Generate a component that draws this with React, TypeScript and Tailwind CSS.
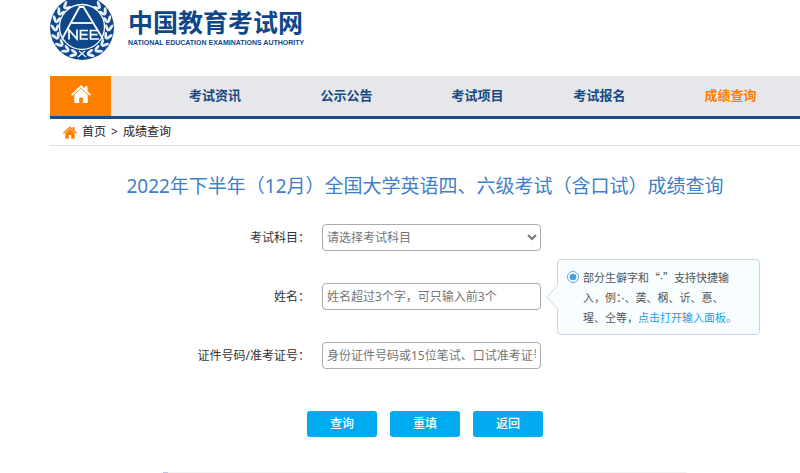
import { FormEvent, useState } from 'react';

interface NavItem {
  label: string;
  width: string;
  active?: boolean;
}

const navItems: NavItem[] = [
  { label: '考试资讯', width: 'w-[132px]' },
  { label: '公示公告', width: 'w-[131px]' },
  { label: '考试项目', width: 'w-[131px]' },
  { label: '考试报名', width: 'w-[113px]' },
  { label: '成绩查询', width: 'w-[149px]', active: true },
];

const leafAngles = [14, 32, 50, 68, 86, 104, 122, 140];

function Wreath() {
  return (
    <g fill="#e8f0f8">
      {leafAngles.map((a) => (
        <g key={a} transform={`rotate(${180 - a} 32 32)`}>
          <ellipse cx="30" cy="3.4" rx="4" ry="1.5" transform="rotate(30 30 3.4)" />
          <ellipse cx="30" cy="7.2" rx="3.6" ry="1.4" transform="rotate(-22 30 7.2)" />
        </g>
      ))}
    </g>
  );
}

function Emblem() {
  return (
    <svg viewBox="0 0 64 64" className="-mt-1 size-16 shrink-0" aria-hidden="true">
      <circle cx="32" cy="32" r="32" fill="#0f478a" />
      <Wreath />
      <g transform="translate(64 0) scale(-1 1)">
        <Wreath />
      </g>
      <circle cx="32" cy="31" r="22.5" fill="#0f478a" stroke="#fff" strokeWidth="1.3" />
      <g fill="none" stroke="#fff" strokeWidth="1.8">
        <path d="M12 43 29.5 11h4L53 43" />
        <path d="M21.5 27h21" />
        <path d="M19 43.5V34l8 9V33.5" strokeWidth="1.7" />
        <path d="M38 34.5h-7.5v8.5H38M30.5 38.7h7" strokeWidth="1.7" />
        <path d="M48 34.5h-7.5v8.5H49M40.5 38.7h7" strokeWidth="1.7" />
      </g>
      <path d="m28 61 7-6M36 61l-7-6" stroke="#e8f0f8" strokeWidth="1.3" />
    </svg>
  );
}

function HomeIcon({ className }: { className: string }) {
  return (
    <svg viewBox="0 0 20 18" className={className} fill="currentColor" aria-hidden="true">
      <path d="M10 0 0 9.4l1.2 1.3L10 2.9l8.8 7.8L20 9.4l-3.5-3.3V1.2h-2.7v2.4z" />
      <path d="M10 3.7 3.3 9.8V18h4.900v-5.400h3.600V18h4.900V9.800z" />
    </svg>
  );
}

const labelClass = 'w-[260px] shrink-0 text-right text-xs text-[#333]';
const fieldClass =
  'h-[27px] w-[219px] rounded border border-[#aaa] bg-white text-xs text-[#757575] placeholder:text-[#757575] outline-none focus:border-[#00a9f2]';
const buttonClass = 'h-[26px] w-[70px] rounded-[3px] bg-[#00aaf1] text-xs font-medium text-white hover:bg-[#0098d8]';

export default function App() {
  const [subject, setSubject] = useState('');
  const [name, setName] = useState('');
  const [idNumber, setIdNumber] = useState('');

  const handleSubmit = (e: FormEvent) => {
    e.preventDefault();
  };

  const handleReset = () => {
    setSubject('');
    setName('');
    setIdNumber('');
  };

  return (
    <div className="overflow-x-hidden bg-white pl-[50px] font-['Noto_Sans','Noto_Sans_CJK_SC',sans-serif] text-[#333]">
      <header className="flex h-19 items-start gap-[14px] overflow-hidden">
        <Emblem />
        <div className="pt-[7px] text-[#0f478a]">
          <div className="font-['Noto_Sans_CJK_SC',sans-serif] text-[25px] leading-7 font-bold">中国教育考试网</div>
          <div className="mt-[3px] font-['Liberation_Sans',sans-serif] text-[7px] leading-[10px] font-bold whitespace-nowrap">
            NATIONAL EDUCATION EXAMINATIONS AUTHORITY
          </div>
        </div>
      </header>

      <nav className="flex h-[43px] border-b-3 border-[#1a4a82] bg-[#e6e7eb]">
        <a href="#home" aria-label="首页" className="flex w-[61px] shrink-0 items-center justify-center bg-[#ff7f00] text-white">
          <HomeIcon className="mb-1 h-[18px] w-5" />
        </a>
        <div className="flex items-center pl-[38px]">
          {navItems.map((item) => (
            <a
              key={item.label}
              href="#nav"
              className={`${item.width} shrink-0 text-center text-[13px] font-bold ${
                item.active ? 'text-[#ff7f00]' : 'text-[#174a80]'
              }`}
            >
              {item.label}
            </a>
          ))}
        </div>
      </nav>

      <div className="flex h-[27px] items-center border-b border-[#ddd] pl-[13px] text-xs text-[#222]">
        <HomeIcon className="mr-[5px] h-[13px] w-[14px] text-[#ff7f00]" />
        <a href="#home">首页</a>
        <span className="mx-[5px]">&gt;</span>
        <a href="#query">成绩查询</a>
      </div>

      <main>
        <h1 className="mt-6 text-center text-[19px] leading-8 whitespace-nowrap text-[#4080c8]">
          2022年下半年（12月）全国大学英语四、六级考试（含口试）成绩查询
        </h1>

        <form onSubmit={handleSubmit} onReset={handleReset} className="mt-[22px] flex flex-col gap-8">
          <div className="flex items-center gap-3">
            <label htmlFor="subject" className={labelClass}>考试科目：</label>
            <select id="subject" value={subject} onChange={(e) => setSubject(e.target.value)} className={fieldClass}>
              <option value="">请选择考试科目</option>
              <option value="cet4">英语四级笔试</option>
              <option value="cet6">英语六级笔试</option>
            </select>
          </div>

          <div className="flex items-center gap-3">
            <label htmlFor="name" className={labelClass}>姓名：</label>
            <div className="relative">
              <input
                id="name"
                type="text"
                value={name}
                onChange={(e) => setName(e.target.value)}
                placeholder="姓名超过3个字，可只输入前3个"
                className={`${fieldClass} block px-1`}
              />
              <div className="absolute top-1/2 left-full ml-4 flex w-[203px] -translate-y-1/2 gap-1 rounded border border-[#c8d8ec] bg-[#f8fdff] py-[7px] pr-3 pl-[9px] text-[11px] leading-5 text-[#555]">
                <svg viewBox="0 0 12 24" className="absolute top-1/2 -left-3 h-6 w-3 -translate-y-1/2" aria-hidden="true">
                  <path d="M12 0 1 12l11 12" fill="#f8fdff" stroke="#c8d8ec" />
                </svg>
                <svg viewBox="0 0 12 12" className="mt-1 size-3 shrink-0" aria-hidden="true">
                  <circle cx="6" cy="6" r="5.5" fill="#fff" stroke="#55a8dc" />
                  <circle cx="6" cy="6" r="3.3" fill="#4a9fd8" />
                </svg>
                <p className="font-['Noto_Sans_CJK_SC',sans-serif] whitespace-nowrap">
                  部分生僻字和“<span className="font-['Noto_Sans',sans-serif] leading-none">·</span>”支持快捷输
                  <br />
                  入，例：<span className="font-['Noto_Sans',sans-serif] leading-none">·</span>、䶮、㭎、䜣、惪、
                  <br />
                  瑆、仝等，
                  <a href="#panel" className="text-[#1e9fe8]">点击打开输入面板。</a>
                </p>
              </div>
            </div>
          </div>

          <div className="flex items-center gap-3">
            <label htmlFor="idNumber" className={labelClass}>证件号码/准考证号：</label>
            <input
              id="idNumber"
              type="text"
              value={idNumber}
              onChange={(e) => setIdNumber(e.target.value)}
              placeholder="身份证件号码或15位笔试、口试准考证号"
              className={`${fieldClass} px-1`}
            />
          </div>

          <div className="mt-[10px] flex gap-[13px] pl-[257px]">
            <button type="submit" className={buttonClass}>查询</button>
            <button type="reset" className={buttonClass}>重填</button>
            <button type="button" className={buttonClass}>返回</button>
          </div>
        </form>

        <div className="mt-[35px] mr-[113px] ml-[113px] h-px bg-[#f2f2f2]">
          <div className="h-px w-[5px] bg-[#b9c9e4]" />
        </div>
      </main>
    </div>
  );
}
